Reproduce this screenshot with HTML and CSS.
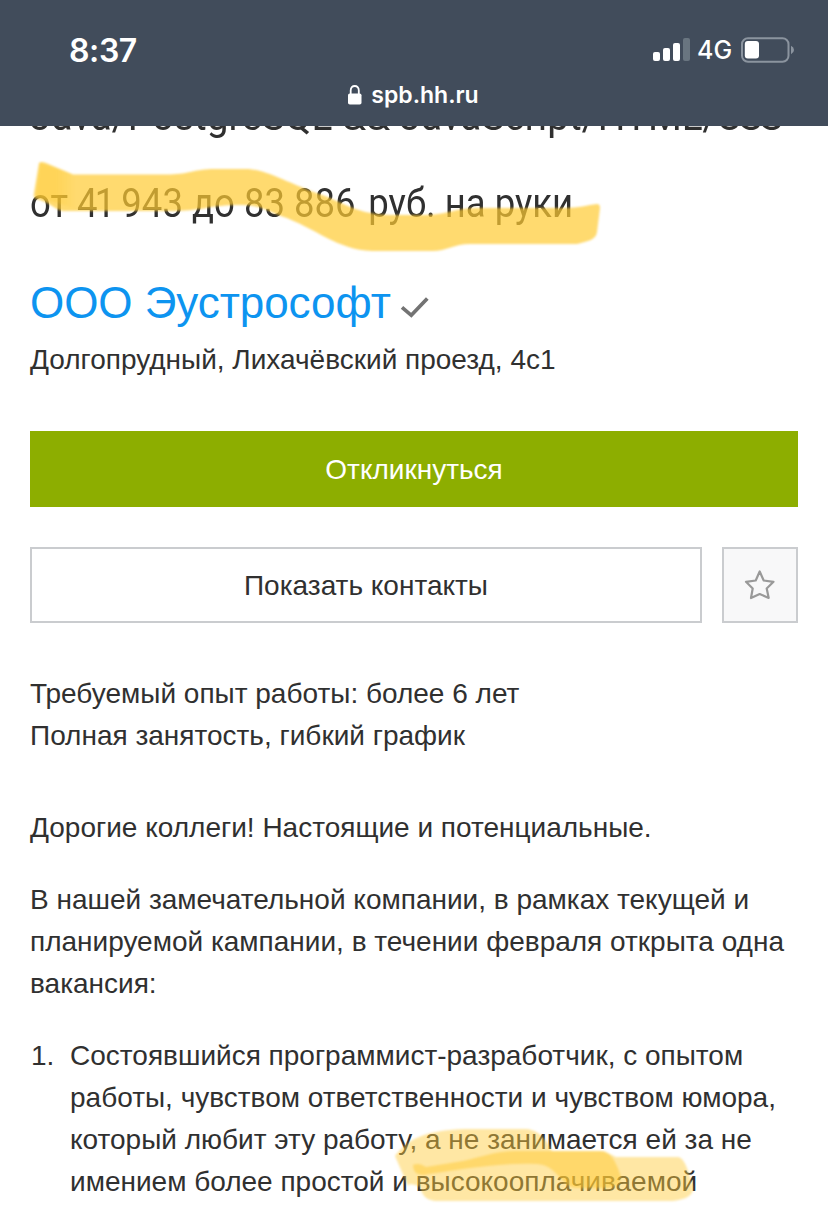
FILE: index.html
```html
<!DOCTYPE html>
<html lang="ru">
<head>
<meta charset="utf-8">
<meta name="viewport" content="width=device-width">
<title>Вакансия</title>
<link rel="stylesheet" href="styles.css">
</head>
<body>
<header class="bar">
  <div class="status">
    <span class="time">8:37</span>
    <div class="indicators">
      <svg class="signal" width="37" height="24" viewBox="0 0 37 24">
        <g fill="#fff"><rect x="0" y="14" width="7" height="9" rx="2"/><rect x="10" y="10" width="7" height="13" rx="2"/><rect x="20" y="5" width="7" height="18" rx="2"/></g>
        <rect x="30" y="0" width="7" height="23" rx="2" fill="#697580"/>
      </svg>
      <span class="network">4G</span>
      <svg class="battery" width="54" height="26" viewBox="0 0 54 26">
        <rect x="1" y="1.2" width="46.5" height="23.6" rx="6" fill="none" stroke="#8b949f" stroke-width="2"/>
        <rect x="3.8" y="4" width="14.2" height="17.5" rx="3" fill="#fff"/>
        <path d="M50 8.7q3 1.6 3 4.3t-3 4.3z" fill="#8b949f"/>
      </svg>
    </div>
  </div>
  <div class="address-bar">
    <svg width="14" height="20" viewBox="0 0 14 20"><rect x="0" y="8.5" width="13.5" height="11" rx="1.8" fill="#fff"/><path d="M2.7 9V5.5C2.7 2.7 4.4 1 6.75 1s4.05 1.7 4.05 4.5V9" fill="none" stroke="#fff" stroke-width="1.8"/></svg>
    <span>spb.hh.ru</span>
  </div>
</header>
<main class="page">
  <div class="title-clip"><h1 class="title"><span>Java/PostgreSQL &amp;&amp; JavaScript/HTML<b class="tight">/CSS</b></span></h1></div>
  <p class="salary"><span>от <b class="narrow">41</b> 943 до 83 <b class="amount">886</b> руб. на руки</span></p>
  <div class="company">
    <a>ООО Эустрософт</a>
    <svg width="30" height="22" viewBox="0 0 30 22"><path d="M2 11.3l9.3 8L27.3 2.5" fill="none" stroke="#737373" stroke-width="3.7"/></svg>
  </div>
  <p class="location">Долгопрудный, Лихачёвский проезд, 4с1</p>
  <button class="apply">Откликнуться</button>
  <div class="actions">
    <button class="contacts">Показать контакты</button>
    <button class="favorite" aria-label="В избранное"><svg width="32" height="32" viewBox="0 0 32 32"><path d="M15.700 2.500L19.700 11.500L29.500 12.800L22.700 19.500L24.700 29L15.700 25L7 29L8.700 19.500L2 12.800L11.700 11.500Z" fill="none" stroke="#999" stroke-width="2.200" stroke-linejoin="round"/></svg></button>
  </div>
  <p class="terms">Требуемый опыт работы: более 6 лет<br>Полная занятость, гибкий график</p>
  <p class="greeting">Дорогие коллеги! Настоящие и потенциальные.</p>
  <p class="intro">В нашей замечательной компании, в рамках текущей и<br>планируемой кампании, в течении февраля открыта одна<br>вакансия:</p>
  <div class="item"><span class="number">1.</span><p>Состоявшийся программист-разработчик, с опытом<br>работы, чувством ответственности и чувством юмора,<br>который любит эту работу, а не занимается ей за не<br>имением более простой и высокооплачиваемой</p></div>
</main>
<svg class="marker" width="828" height="1218" viewBox="0 0 828 1218">
  <defs><linearGradient id="start" x1="0" x2="1"><stop offset=".5" stop-color="#ffc826"/><stop offset="1" stop-color="#ffc826" stop-opacity="0"/></linearGradient></defs>
  <path d="M39 163Q41 161 46 163L73 174.500H170C190 174 195 169 215 169H245C267 169 286 183 325 196C350 206 359 214 391 215H425C452 214 453 208 480 208H565C578 208 588 205 597 204Q600 204 600 208L597 232C596 240 588 241 577 244H470C454 244 447 251 432 251H372C337 250 316 228 281 216C260 207 258 205 235 205C207 206 201 211 170 211H63C55 210 50 202 36 199Q33 198 34 193Z" fill="#ffca32" fill-opacity=".7"/>
  <path d="M40 163L76 175V209L36 196Z" fill="url(#start)" fill-opacity=".32"/>
  <path d="M395 1156C409 1137 430 1130 465 1129H526C541 1130 548 1143 552 1151H604L616 1157H678C685 1158 688 1171 693 1186C694 1195 687 1199 673 1201H438C425 1201 422 1194 420 1187C415 1184 408 1183 408 1186Z" fill="#ffca38" fill-opacity=".46"/>
  <path d="M413 1165Q419 1162 426 1167L463 1161C482 1157 496 1151 515 1151H600C611 1152 615 1160 620 1174C623 1183 615 1188 606 1188H577C560 1187 558 1165 537 1164C500 1162 457 1170 429 1174Q413 1178 413 1165Z" fill="#ffca32" fill-opacity=".5"/>
</svg>
</body>
</html>
```
FILE: styles.css
```css
* { box-sizing: border-box; }
body { margin: 0; width: 828px; height: 1218px; overflow: hidden; position: relative; background: #fff; color: #303030; font-family: "Liberation Sans", Arial, sans-serif; font-size: 28px; line-height: 42px; }
p, h1 { margin: 0; white-space: nowrap; }
button { padding: 0; font: inherit; color: inherit; border-radius: 0; }
.bar { height: 126px; background: #414c5b; color: #fff; font-family: Inter, sans-serif; overflow: hidden; }
.status { display: flex; justify-content: space-between; height: 74px; padding: 30px 33px 0 69px; }
.time { font-size: 32px; line-height: 41px; font-weight: 600; letter-spacing: -.4px; }
.indicators { display: flex; align-items: flex-start; }
.signal { margin-top: 8px; }
.network { width: 51px; padding-left: 7px; font-size: 25px; line-height: 40px; font-weight: 500; }
.battery { margin-top: 7px; }
.address-bar { display: flex; justify-content: center; align-items: center; gap: 9px; height: 42px; font-size: 23px; font-weight: 600; padding-right: 1px; }
.page { padding: 0 30px; }
.title-clip { height: 36px; margin-right: -30px; overflow: hidden; }
.title { margin-top: -38px; font: 400 41px/56px Roboto, sans-serif; }
.title span, .salary span { display: inline-block; transform-origin: left; }
.title span { transform: scaleX(.945); }
.title b, .salary b { font-weight: 400; }
.tight { letter-spacing: -2.5px; }
.salary { margin-top: 14px; font: 400 40px/56px Roboto, sans-serif; }
.salary span { transform: scaleX(.913); }
.narrow { letter-spacing: -3.2px; }
.amount { margin-right: 4px; }
.company { display: flex; align-items: center; height: 60px; margin-top: 41px; font-size: 44px; color: #0d94f0; gap: 9px; }
.company a { letter-spacing: -.05px; }
.company svg { margin-top: 7px; }
.location { margin-top: 6px; }
.apply { display: block; width: 100%; height: 76px; padding-top: 1px; margin-top: 50px; border: 0; background: #8dae00; color: #fff; }
.actions { display: flex; gap: 20px; margin-top: 40px; }
.contacts { flex: 1; height: 76px; padding-top: 1px; border: 2px solid #cacccf; background: #fff; }
.favorite { display: flex; align-items: center; justify-content: center; width: 76px; height: 76px; border: 2px solid #cacccf; background: #f8f8f9; }
.terms { margin-top: 50px; }
.greeting { margin-top: 50px; }
.intro, .item { margin-top: 30px; }
.item { display: flex; }
.number { width: 40px; padding-left: 1px; }
.marker { position: absolute; left: 0; top: 0; filter: blur(.8px); pointer-events: none; }
```
